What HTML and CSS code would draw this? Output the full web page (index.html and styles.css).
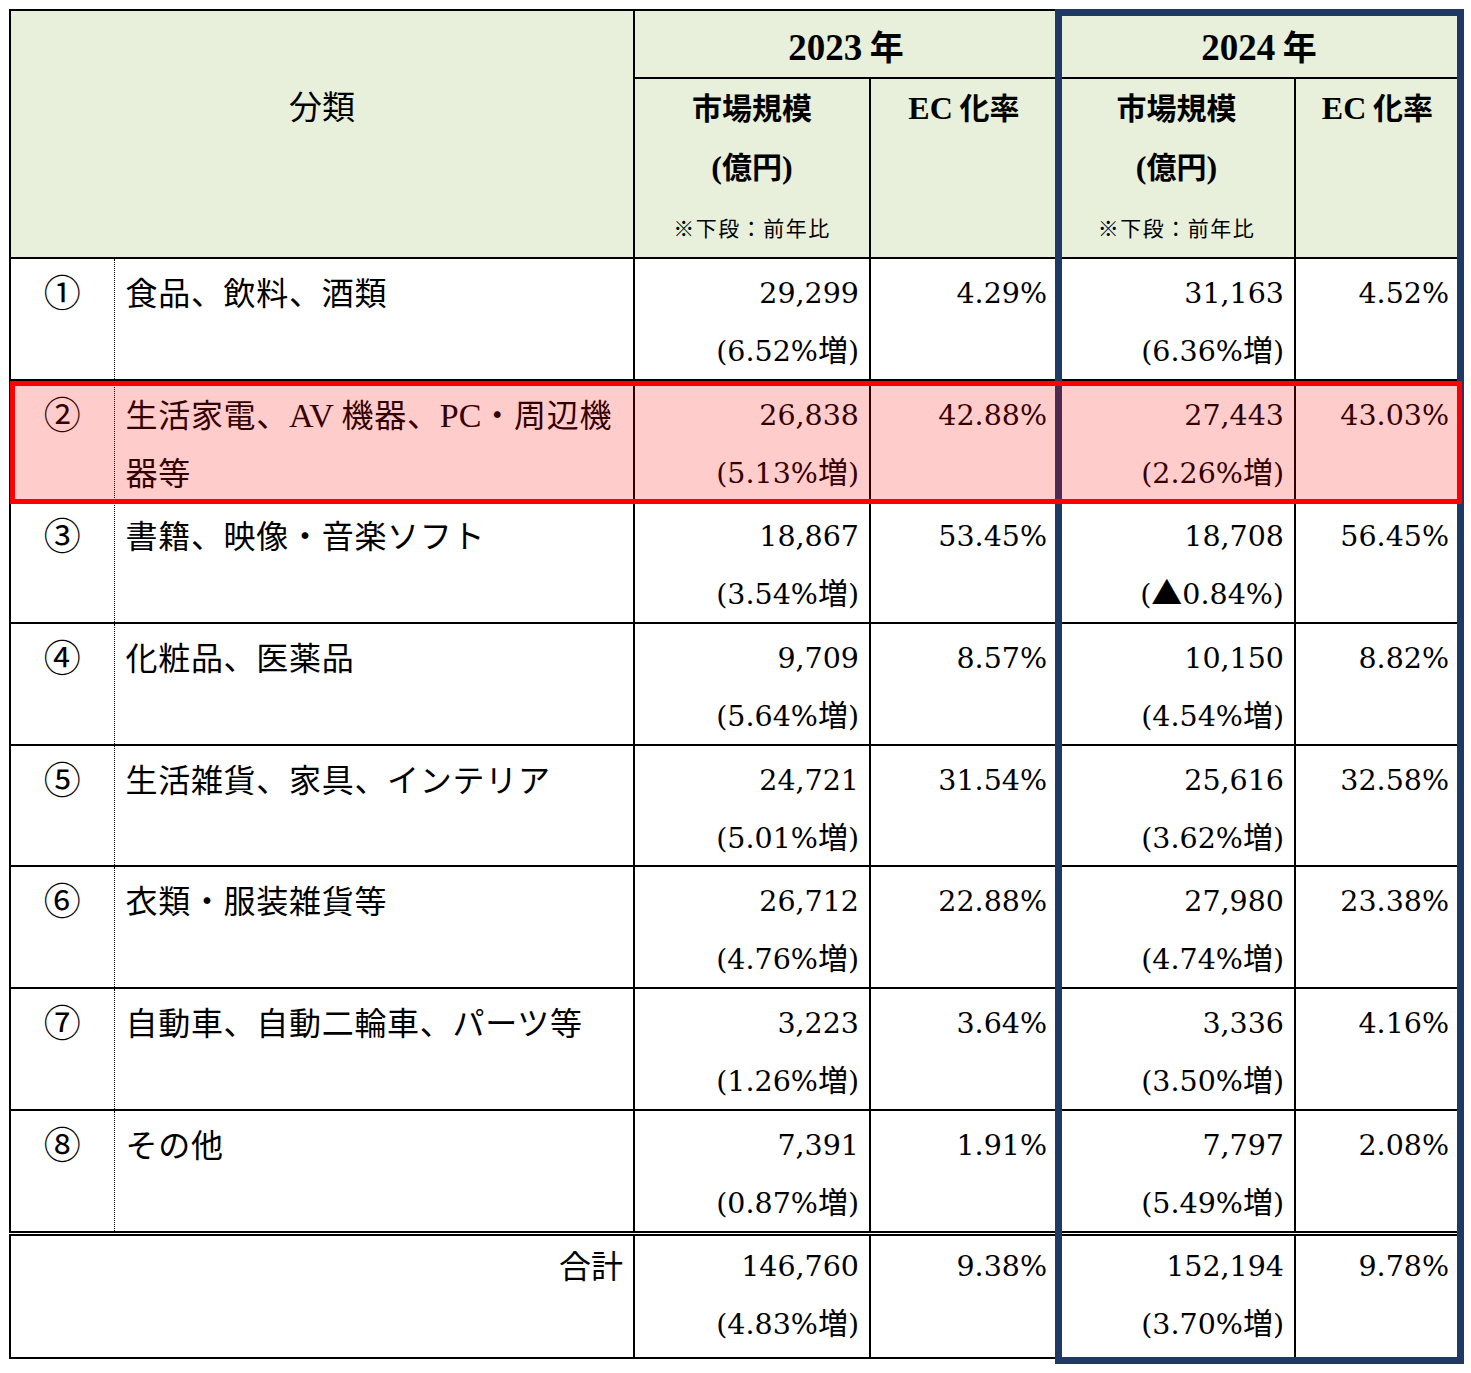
FILE: index.html
```html
<!DOCTYPE html>
<html lang="ja">
<head>
<meta charset="utf-8">
<title>EC市場規模</title>
<link rel="stylesheet" href="styles.css">
</head>
<body>
<div class="sheet">
  <table class="grid">
    <colgroup>
      <col class="c-no"><col class="c-name"><col class="c-mk"><col class="c-ec"><col class="c-mk2"><col class="c-ec2">
    </colgroup>
    <thead>
      <tr class="h-year">
        <th class="h-cat" colspan="2" rowspan="2">分類</th>
        <th class="h-y" colspan="2"><span class="lat">2023</span> 年</th>
        <th class="h-y" colspan="2"><span class="lat">2024</span> 年</th>
      </tr>
      <tr class="h-sub">
        <th class="h-s"><div class="l">市場規模</div><div class="l l2"><span class="lat">(</span>億円<span class="lat">)</span></div><div class="note">※下段：前年比</div></th>
        <th class="h-s"><div class="l"><span class="lat">EC</span> 化率</div></th>
        <th class="h-s"><div class="l">市場規模</div><div class="l l2"><span class="lat">(</span>億円<span class="lat">)</span></div><div class="note">※下段：前年比</div></th>
        <th class="h-s"><div class="l"><span class="lat">EC</span> 化率</div></th>
      </tr>
    </thead>
    <tbody>
      <tr class="row">
        <td class="no"><div class="nm">①</div></td><td class="name"><div class="nm">食品、飲料、酒類</div></td>
        <td class="num"><div class="ln">29,299</div><div class="ln">(6.52%<span class="j">増</span>)</div></td><td class="num"><div class="ln">4.29%</div></td>
        <td class="num"><div class="ln">31,163</div><div class="ln">(6.36%<span class="j">増</span>)</div></td><td class="num"><div class="ln">4.52%</div></td>
      </tr>
      <tr class="row">
        <td class="no"><div class="nm">②</div></td><td class="name"><div class="nm">生活家電、<span class="lat">AV</span> 機器、<span class="lat">PC</span>・周辺機器等</div></td>
        <td class="num"><div class="ln">26,838</div><div class="ln">(5.13%<span class="j">増</span>)</div></td><td class="num"><div class="ln">42.88%</div></td>
        <td class="num"><div class="ln">27,443</div><div class="ln">(2.26%<span class="j">増</span>)</div></td><td class="num"><div class="ln">43.03%</div></td>
      </tr>
      <tr class="row">
        <td class="no"><div class="nm">③</div></td><td class="name"><div class="nm">書籍、映像・音楽ソフト</div></td>
        <td class="num"><div class="ln">18,867</div><div class="ln">(3.54%<span class="j">増</span>)</div></td><td class="num"><div class="ln">53.45%</div></td>
        <td class="num"><div class="ln">18,708</div><div class="ln">(<span class="j tri">▲</span>0.84%)</div></td><td class="num"><div class="ln">56.45%</div></td>
      </tr>
      <tr class="row">
        <td class="no"><div class="nm">④</div></td><td class="name"><div class="nm">化粧品、医薬品</div></td>
        <td class="num"><div class="ln">9,709</div><div class="ln">(5.64%<span class="j">増</span>)</div></td><td class="num"><div class="ln">8.57%</div></td>
        <td class="num"><div class="ln">10,150</div><div class="ln">(4.54%<span class="j">増</span>)</div></td><td class="num"><div class="ln">8.82%</div></td>
      </tr>
      <tr class="row">
        <td class="no"><div class="nm">⑤</div></td><td class="name"><div class="nm">生活雑貨、家具、インテリア</div></td>
        <td class="num"><div class="ln">24,721</div><div class="ln">(5.01%<span class="j">増</span>)</div></td><td class="num"><div class="ln">31.54%</div></td>
        <td class="num"><div class="ln">25,616</div><div class="ln">(3.62%<span class="j">増</span>)</div></td><td class="num"><div class="ln">32.58%</div></td>
      </tr>
      <tr class="row">
        <td class="no"><div class="nm">⑥</div></td><td class="name"><div class="nm">衣類・服装雑貨等</div></td>
        <td class="num"><div class="ln">26,712</div><div class="ln">(4.76%<span class="j">増</span>)</div></td><td class="num"><div class="ln">22.88%</div></td>
        <td class="num"><div class="ln">27,980</div><div class="ln">(4.74%<span class="j">増</span>)</div></td><td class="num"><div class="ln">23.38%</div></td>
      </tr>
      <tr class="row">
        <td class="no"><div class="nm">⑦</div></td><td class="name"><div class="nm">自動車、自動二輪車、パーツ等</div></td>
        <td class="num"><div class="ln">3,223</div><div class="ln">(1.26%<span class="j">増</span>)</div></td><td class="num"><div class="ln">3.64%</div></td>
        <td class="num"><div class="ln">3,336</div><div class="ln">(3.50%<span class="j">増</span>)</div></td><td class="num"><div class="ln">4.16%</div></td>
      </tr>
      <tr class="row">
        <td class="no"><div class="nm">⑧</div></td><td class="name"><div class="nm">その他</div></td>
        <td class="num"><div class="ln">7,391</div><div class="ln">(0.87%<span class="j">増</span>)</div></td><td class="num"><div class="ln">1.91%</div></td>
        <td class="num"><div class="ln">7,797</div><div class="ln">(5.49%<span class="j">増</span>)</div></td><td class="num"><div class="ln">2.08%</div></td>
      </tr>
      <tr class="row total">
        <td class="sum" colspan="2"><div class="nm">合計</div></td>
        <td class="num"><div class="ln">146,760</div><div class="ln">(4.83%<span class="j">増</span>)</div></td><td class="num"><div class="ln">9.38%</div></td>
        <td class="num"><div class="ln">152,194</div><div class="ln">(3.70%<span class="j">増</span>)</div></td><td class="num"><div class="ln">9.78%</div></td>
      </tr>
    </tbody>
  </table>
  <div class="frame-2024"></div>
  <div class="mark-row2"></div>
</div>
</body>
</html>
```

FILE: styles.css
```css
html, body {
  margin: 0;
  padding: 0;
  background: #fff;
}

.sheet {
  position: relative;
  width: 1471px;
  height: 1373px;
  padding: 9px 0 0 9px;
  box-sizing: border-box;
}

.grid {
  border-collapse: collapse;
  table-layout: fixed;
  width: 1450px;
  color: #000;
  font-family: "Noto Sans CJK JP", sans-serif;
}

.c-no { width: 104px; }
.c-name { width: 520px; }
.c-mk { width: 236px; }
.c-ec { width: 188px; }
.c-mk2 { width: 237px; }
.c-ec2 { width: 165px; }

.grid th,
.grid td {
  border: 2px solid #000;
  padding: 0;
}

.grid th {
  background: #e8f0dc;
  font-weight: 700;
}

.lat {
  font-family: "Liberation Serif", serif;
  line-height: 1;
}

.h-year th { height: 63px; }
.h-sub th { height: 178px; }

.h-cat {
  font-weight: 400 !important;
  font-size: 33px;
  line-height: 58px;
  vertical-align: top;
  padding-top: 65px !important;
}

.h-y {
  font-size: 34px;
  line-height: 40px;
  vertical-align: middle;
  padding-top: 3px !important;
}
.h-y .lat {
  font-size: 37px;
  font-weight: 700;
}

.h-s {
  vertical-align: top;
  font-size: 30px;
}
.h-s .l {
  height: 58px;
  line-height: 58px;
}
.h-s .l:first-child {
  margin-top: -2px;
}
.h-s .l2 {
  margin-top: 1px;
}
.h-s .lat {
  font-size: 32px;
  font-weight: 700;
}
.h-s .note {
  font-weight: 400;
  font-size: 21px;
  letter-spacing: 1.5px;
  height: 40px;
  line-height: 40px;
  padding-top: 13px;
}

.row td {
  vertical-align: top;
  font-size: 30px;
  line-height: 58px;
  padding-top: 6px;
  padding-bottom: 0.7px;
  height: 113px;
  box-sizing: content-box;
}

.ln {
  height: 58px;
  line-height: 58px;
  white-space: nowrap;
}
.ln + .ln {
  height: 55px;
}

.nm {
  margin-top: -3px;
  margin-bottom: -3px;
}

.row td.no {
  text-align: center;
  border-right: 1px dotted #000;
  font-size: 37px;
}

.row td.name {
  border-left: 1px dotted #000;
  padding-left: 11px;
  padding-right: 10px;
  font-size: 32px;
  letter-spacing: 0.7px;
}
.name .lat {
  font-size: 34px;
  letter-spacing: 0;
}

.row td.num {
  text-align: right;
  padding-right: 10px;
  font-family: "DejaVu Serif", serif;
  font-size: 28.5px;
}
.num .j {
  font-family: "Noto Sans CJK JP", sans-serif;
  font-size: 30px;
  line-height: 1;
}
.num .tri {
  font-size: 31px;
}

.total td {
  border-top: 5px double #000;
}
.row.total td {
  padding-top: 2px;
  padding-bottom: 6.6px;
}
.row td.sum {
  text-align: right;
  padding-right: 10px;
  font-size: 32px;
}

.frame-2024 {
  position: absolute;
  left: 1055px;
  top: 9px;
  width: 409px;
  height: 1355px;
  box-sizing: border-box;
  border: 7px solid #1f3864;
}

.mark-row2 {
  position: absolute;
  left: 10px;
  top: 381px;
  width: 1452px;
  height: 123px;
  box-sizing: border-box;
  border: 5px solid #ff0000;
  background: rgba(255, 0, 0, 0.2);
}
```
